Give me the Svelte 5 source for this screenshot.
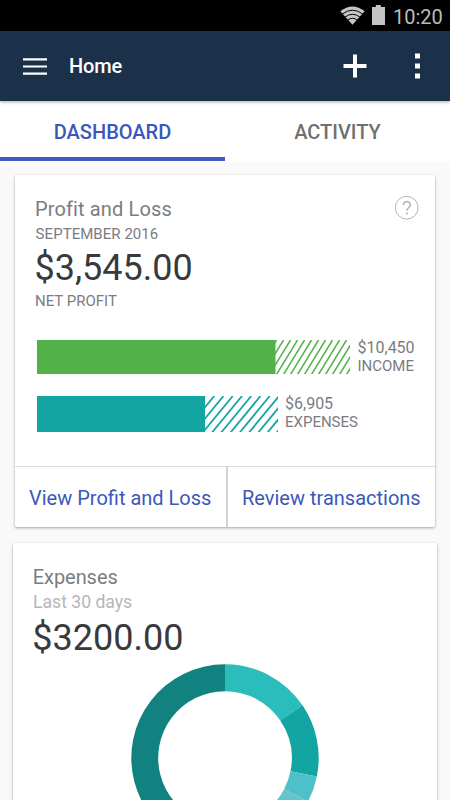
<script>
  const bars = [
    { name: 'income', amount: '$10,450', label: 'INCOME', color: '#52b148', solid: 238.5, total: 313, height: 34.5, step: 7, run: 21, shift: 1, stroke: 1.5 },
    { name: 'expenses', amount: '$6,905', label: 'EXPENSES', color: '#12a5a1', solid: 168, total: 241, height: 36.5, step: 9.25, run: 30, shift: 0, stroke: 1.8 }
  ];

  function hatch(bar) {
    const lines = [];
    for (let x = bar.solid - bar.run + bar.shift; x < bar.total; x += bar.step) {
      lines.push(x);
    }
    return lines;
  }

  const slices = [
    { from: 0, to: 55.8, color: '#2abdbb' },
    { from: 55.8, to: 101.4, color: '#12a5a1' },
    { from: 101.4, to: 117.8, color: '#4dc0c9' },
    { from: 117.8, to: 150, color: '#65c3cb' },
    { from: 150, to: 360, color: '#11827f' }
  ];

  function arc({ from, to }) {
    const c = 94, outer = 93.7, inner = 66.8;
    const point = (r, deg) => {
      const a = (deg - 90) * Math.PI / 180;
      return `${c + r * Math.cos(a)} ${c + r * Math.sin(a)}`;
    };
    const large = to - from > 180 ? 1 : 0;
    return `M${point(outer, from)}A${outer} ${outer} 0 ${large} 1 ${point(outer, to)}L${point(inner, to)}A${inner} ${inner} 0 ${large} 0 ${point(inner, from)}Z`;
  }
</script>

<div class="screen">
  <div class="status">
    <svg class="wifi" width="25" height="19" viewBox="0 0 25 19">
      <path d="M.3 5.2Q12.5-4.4 24.7 5.2L12.5 18.8Z" fill="#c6c6c6" />
      <g fill="none" stroke="#000" stroke-width="1">
        <path d="M2.3 8Q12.5 .4 22.7 8" />
        <path d="M5 11.1Q12.5 5.4 20 11.1" />
        <path d="M7.6 14.1Q12.5 10.4 17.4 14.1" />
      </g>
    </svg>
    <svg class="battery" width="13" height="20" viewBox="0 0 13 20">
      <path d="M3.8 0h5v2H13v18H0V2h3.8z" fill="#c4c4c4" />
    </svg>
    <span class="clock">10:20</span>
  </div>

  <header>
    <svg class="menu" width="24" height="17" viewBox="0 0 24 17">
      <path d="M0 1.3h24M0 8.5h24M0 15.7h24" stroke="#fff" stroke-width="2.2" />
    </svg>
    <h1>Home</h1>
    <svg class="add" width="24" height="24" viewBox="0 0 24 24">
      <path d="M12 .5v23M.5 12h23" stroke="#fff" stroke-width="4" />
    </svg>
    <svg class="more" width="6" height="26" viewBox="0 0 6 26">
      <path d="M0 .5h5v5H0zM0 10.5h5v5H0zM0 20.5h5v5H0z" fill="#fff" />
    </svg>
  </header>

  <nav>
    <div class="tab active"><span>DASHBOARD</span></div>
    <div class="tab"><span>ACTIVITY</span></div>
  </nav>

  <main>
    <section class="card profit">
      <div class="body">
        <div class="summary">
          <div>
            <h2 class="title">Profit and Loss</h2>
            <p class="period">SEPTEMBER 2016</p>
            <p class="amount">$3,545.00</p>
            <p class="caption">NET PROFIT</p>
          </div>
          <svg class="help" width="24" height="24" viewBox="0 0 24 24">
            <circle cx="11.7" cy="11.7" r="11.4" fill="none" stroke="#b3b4b8" />
            <path d="M8.5 9.1C8.5 4.5 15.3 4.6 15.3 8.8c0 2.7-3.4 3-3.4 6" fill="none" stroke="#a5a6ab" stroke-width="1.3" />
            <circle cx="11.9" cy="17.4" r="1" fill="#a5a6ab" />
          </svg>
        </div>
        {#each bars as bar}
          <div class="bar {bar.name}">
            <svg width={bar.total} height={bar.height}>
              <g stroke={bar.color} stroke-width={bar.stroke}>
                {#each hatch(bar) as x}
                  <line x1={x} y1={bar.height} x2={x + bar.run} y2="0" />
                {/each}
              </g>
              <rect width={bar.solid} height={bar.height} fill={bar.color} />
            </svg>
            <div class="legend">
              <span class="value">{bar.amount}</span>
              <span class="label">{bar.label}</span>
            </div>
          </div>
        {/each}
      </div>
      <div class="actions">
        <span class="view">View Profit and Loss</span>
        <span class="review">Review transactions</span>
      </div>
    </section>

    <section class="card spending">
      <h2>Expenses</h2>
      <p class="range">Last 30 days</p>
      <p class="amount">$3200.00</p>
      <svg class="donut" width="188" height="188" viewBox="0 0 188 188">
        {#each slices as slice}
          <path d={arc(slice)} fill={slice.color} />
        {/each}
      </svg>
    </section>
  </main>
</div>

<style>
  :global(body) { margin: 0; overflow: hidden; }
  .screen {
    width: 450px;
    height: 800px;
    overflow: hidden;
    display: flex;
    flex-direction: column;
    background: #f9f9fa;
    font-family: Roboto, "Liberation Sans", sans-serif;
    color: #7b7c81;
  }
  h1, h2, p { margin: 0; font-weight: 400; white-space: nowrap; }
  svg { display: block; flex: none; }
  .status {
    height: 31px;
    flex: none;
    box-sizing: border-box;
    padding: 5px 7px 0 0;
    display: flex;
    justify-content: flex-end;
    background: #000;
  }
  .wifi { margin-top: 1px; }
  .battery { margin: 0 8px 0 7px; }
  .clock { width: 50px; font-size: 20px; line-height: 24px; color: #bcbcbc; white-space: nowrap; }
  header {
    height: 70px;
    flex: none;
    box-sizing: border-box;
    padding: 0 29px 0 23px;
    display: flex;
    align-items: center;
    background: #1b3149;
    box-shadow: 0 1px 3px rgba(27, 35, 73, .4);
    position: relative;
  }
  h1 { margin: 0 auto 0 22px; color: #fff; font-size: 20px; font-weight: 500; line-height: 24px; letter-spacing: -.15px; }
  .more { margin-left: 48px; }
  nav { height: 61px; flex: none; display: flex; background: #fff; }
  .tab {
    flex: 1;
    box-sizing: border-box;
    border-bottom: 4px solid transparent;
    height: 60px;
    padding-top: 19px;
    text-align: center;
    font-size: 20px;
    font-weight: 500;
    line-height: 24px;
    color: #707070;
  }
  .active { color: #3c57bb; border-color: #415bbd; }
  main { flex: none; padding-top: 13px; }
  .card { background: #fff; border-radius: 2px; box-shadow: 0 1px 3px rgba(0, 0, 0, .35); }
  .profit { width: 420px; height: 352px; margin-left: 15px; }
  .body { height: 291px; box-sizing: border-box; padding: 22px 0 0 20px; }
  .summary { display: flex; justify-content: space-between; padding-right: 16px; height: 142.5px; }
  .help { margin-top: -1px; }
  h2 { font-size: 20px; line-height: 24px; }
  .title { letter-spacing: .13px; }
  .period { margin-top: 3px; padding-left: .6px; font-size: 15px; line-height: 20px; letter-spacing: .05px; }
  .amount { margin-top: 4px; font-size: 36px; line-height: 40px; color: #393a3d; }
  .profit .amount { margin-left: -.5px; }
  .caption { margin-top: 3px; font-size: 15px; line-height: 20px; }
  .bar { display: flex; }
  .income { height: 56px; padding-left: 1.5px; gap: 8px; }
  .expenses { padding-left: 2px; gap: 7px; }
  .legend { display: flex; flex-direction: column; font-size: 15px; line-height: 18px; margin-top: -.5px; }
  .value { font-size: 16px; }
  .actions { height: 61px; box-sizing: border-box; border-top: 1px solid #dcdcdd; display: flex; color: #3b57b9; font-size: 20px; line-height: 62px; white-space: nowrap; }
  .view { width: 213px; height: 60px; box-sizing: border-box; padding-left: 14px; border-right: 2px solid #d4d4d6; }
  .review { padding-left: 14px; }
  .spending { width: 424px; height: 340px; box-sizing: border-box; margin: 16px 0 0 13px; padding: 21.5px 0 0 20px; }
  .spending h2 { margin-left: -.3px; letter-spacing: -.05px; }
  .range { margin-top: 3px; font-size: 17.6px; line-height: 20px; color: #b5b6ba; }
  .spending .amount { margin: 6px 0 0 -.7px; }
  .donut { margin: 6.5px 0 0 98px; }
</style>
